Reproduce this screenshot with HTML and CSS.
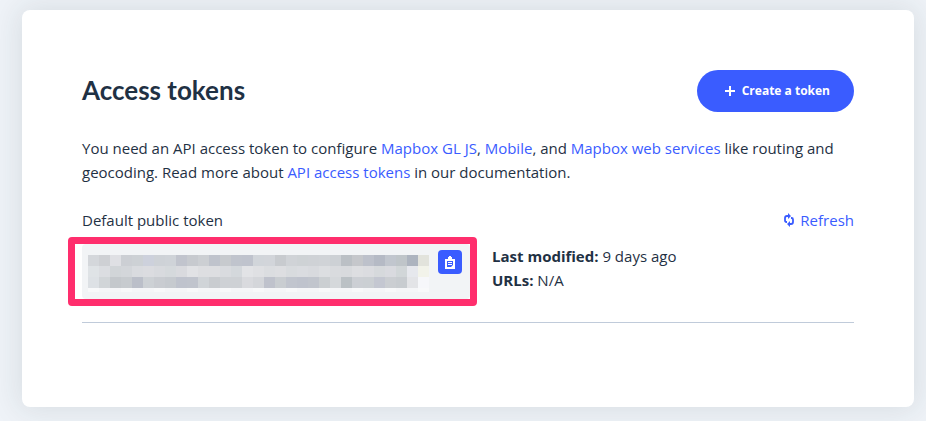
FILE: index.html
```html
<!DOCTYPE html>
<html lang="en">
<head>
  <meta charset="UTF-8">
  <meta name="viewport" content="width=device-width, initial-scale=1.0">
  <title>Access tokens</title>
  <link rel="stylesheet" href="styles.css">
</head>
<body>
  <main class="card">
    <header class="card-header">
      <h1>Access tokens</h1>
      <button class="create-btn" type="button">
        <svg width="10" height="10" viewBox="0 0 10 10" aria-hidden="true"><path d="M5 0v10M0 5h10" stroke="currentColor" stroke-width="2"/></svg>
        Create a token
      </button>
    </header>

    <p class="intro">You need an API access token to configure <a href="#">Mapbox GL JS</a>, <a href="#">Mobile</a>, and <a href="#">Mapbox web services</a> like routing and geocoding. Read more about <a href="#">API access tokens</a> in our documentation.</p>

    <section class="token">
      <div class="token-title">
        <span>Default public token</span>
        <a class="refresh" href="#">
          <svg width="12" height="14" viewBox="0 0 12 14" fill="none" stroke="currentColor" stroke-width="2" aria-hidden="true">
            <path d="M4 9H3.500Q2 9 2 7.500V5Q2 3 4 3H6M8 5h.5Q10 5 10 6.500V9q0 2-2 2H6" stroke-width="1.800"/>
            <path d="M5 0l3 3-3 3zM7 8l-3 3 3 3z" fill="currentColor" stroke="none"/>
          </svg>
          Refresh
        </a>
      </div>
      <div class="token-row">
        <div class="highlight">
          <div class="token-value">
            <svg class="mosaic" id="mosaic" viewBox="0 0 341 37" shape-rendering="crispEdges" role="img" aria-label="Hidden token"></svg>
            <button class="copy-btn" type="button" aria-label="Copy token">
              <svg width="10" height="13" viewBox="0 0 10 13" aria-hidden="true">
                <path d="M0 3h3V1h1V0h2v1h1v2h3v10H0z" fill="#fff"/>
                <path d="M2 5h6v4L6 11H2z" fill="#3a5cff"/>
                <path d="M3 6h4v1H3zM3 8h4v1H3z" fill="#fff"/>
              </svg>
            </button>
          </div>
        </div>
        <div class="token-meta">
          <div><strong>Last modified:</strong> 9 days ago</div>
          <div><strong>URLs:</strong> N/A</div>
        </div>
      </div>
    </section>
  </main>

  <script src="script.js"></script>
</body>
</html>
```
FILE: styles.css
```css
* {
  box-sizing: border-box;
}

body {
  margin: 0;
  padding: 10px 12px 14px 22px;
  background-color: #eff3f8;
  color: #1f3144;
  font-family: "Open Sans", "Noto Sans", sans-serif;
  font-size: 15px;
  line-height: 24px;
}

a {
  color: #3a5cff;
  text-decoration: none;
}

button {
  border: none;
  background-color: #3a5cff;
  color: #fff;
  font-family: inherit;
  cursor: pointer;
}

.card {
  padding: 60px 60px 84px;
  border-radius: 8px;
  background-color: #fff;
  box-shadow: 0 0 30px 4px rgba(31, 49, 50, 0.1);
}

.card-header {
  display: flex;
  justify-content: space-between;
  align-items: flex-start;
}

h1 {
  margin: 0;
  font-family: Lato, sans-serif;
  font-size: 26px;
  line-height: 40px;
}

.create-btn {
  display: flex;
  align-items: center;
  gap: 7px;
  height: 42px;
  padding: 0 24px 1px 28px;
  border-radius: 21px;
  font-size: 12px;
  font-weight: 700;
}

.intro {
  margin: 24px 0;
}

.token {
  border-bottom: 1px solid #c0cbda;
  padding-bottom: 16px;
}

.token-title {
  display: flex;
  justify-content: space-between;
}

.refresh {
  display: flex;
  align-items: center;
  gap: 5px;
}

.token-row {
  display: flex;
  gap: 15px;
  margin: 5px 0 0 -14px;
}

.highlight {
  flex: 0 1 409px;
  border: 7px solid #ff2e6d;
  border-radius: 4px;
  padding: 0 0 0 7px;
}

.token-value {
  display: flex;
  justify-content: space-between;
  align-items: flex-start;
  gap: 9px;
  height: 55px;
  padding: 6px 8px 0 6px;
  border-radius: 4px;
  background-color: #f2f4f6;
}

.mosaic {
  flex: 0 1 341px;
  min-width: 0;
  height: 37px;
  margin-top: 5px;
}

.copy-btn {
  display: flex;
  justify-content: center;
  align-items: center;
  width: 24px;
  height: 24px;
  padding: 0;
  border-radius: 4px;
}

.token-meta {
  padding-top: 7px;
}
```
FILE: script.js
```js
const size = 11;
const rows = [
  'd4d7db ced0d4 dfe0e4 cccfd4 cdd1d5 cdd1dc ced2d7 cfd3d8 c1c4cd c7cacf cccfd3 bfc3cc c7cace c0c4cd bfc3cd d1d5da d2d5da c8cbcf d0d3d7 ced2d5 cfd2d6 d0d3d7 cdd1d5 bbc0c5 c5c7cb bdc1cb b5bac5 c1c6ce bfc5c9 adb4bf e2e3dc',
  'dfe3e6 dbdde1 d1d5d8 d3d6da d9dbdf dbdce0 d8dade d5d9dc d9dade e1e2e5 dddee1 dddee1 d9dbdf d4d8dc e2e3e6 dfe0e3 dbdde0 dddee1 d8dbde dadce0 d8dade dcdee1 d9dbde d8dadd dddee1 dbdce0 d6d9dc d9dadf d1d6d8 e6e8ed f2f3ea',
  'dde1e5 d1d5d8 c4c8cc c7cbcf bbbfc9 cdd1d5 c9ccd1 c6cacf bfc3cd c0c4cd d0d4d8 c9ccd0 ced1d5 ced1d5 d9dade d4d6da bfc2cc c9cdd1 c1c5ce bfc3cd c1c5cd cbcfd2 d5d8db bbc1c5 cccfd4 cbcfd3 c4c7d1 cbced2 c8ccd0 e3e4e7 f6f7fa'
];

const mosaic = document.getElementById('mosaic');

function addCell(x, y, height, color) {
  const cell = document.createElementNS('http://www.w3.org/2000/svg', 'rect');
  cell.setAttribute('x', x);
  cell.setAttribute('y', y);
  cell.setAttribute('width', size);
  cell.setAttribute('height', height);
  cell.setAttribute('fill', color);
  mosaic.appendChild(cell);
}

rows.forEach((row, y) => {
  row.split(' ').forEach((color, x) => addCell(x * size, y * size, size, '#' + color));
});

// last row is cut off
for (let x = 0; x < 31; x++) {
  addCell(x * size, 33, 4, x % 3 ? '#f5f6f8' : '#f8f9fa');
}
```
